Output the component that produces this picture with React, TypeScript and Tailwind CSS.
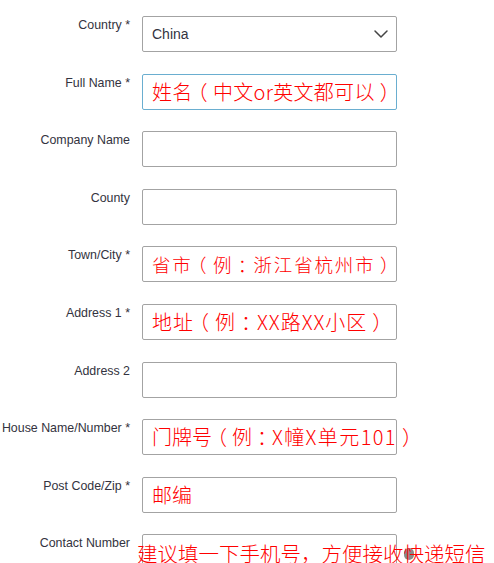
import React from "react";

function Row({
  label,
  children,
  focus = false,
  extra,
}: {
  label: string;
  children?: React.ReactNode;
  focus?: boolean;
  extra?: React.ReactNode;
}) {
  return (
    <div className="flex items-start">
      <div className="w-[130px] shrink-0 text-right text-[12.4px] leading-[14px] pt-[2px] text-[#333340] font-['Liberation_Sans',Arial,sans-serif] whitespace-nowrap">
        {label}
      </div>
      <div className="relative ml-[12px]">
        <div
          className={
            focus
              ? "w-[255px] h-[36px] rounded-[2px] border border-[#6aaed0] flex items-center pl-[9px] whitespace-nowrap"
              : "w-[255px] h-[36px] rounded-[2px] border border-[#a3a3a3] flex items-center pl-[9px] whitespace-nowrap"
          }
        >
          {children}
        </div>
        {extra}
      </div>
    </div>
  );
}

function Red({ children, cls = "" }: { children: React.ReactNode; cls?: string }) {
  return (
    <span
      className={`text-[#ff0000] font-light font-['Noto_Sans_CJK_SC','Noto_Sans',sans-serif] leading-none ${cls}`}
    >
      {children}
    </span>
  );
}

function P({ c }: { c: string }) {
  return (
    <span className="inline-block px-[0.25em] [font-feature-settings:'halt']">
      {c}
    </span>
  );
}

export default function App() {
  return (
    <div className="w-[494px] h-[563px] overflow-hidden bg-white">
      <div className="flex flex-col gap-[21.6px] pt-[16px]">
        <Row label="Country *">
          <div className="flex w-full items-center justify-between pr-[3px]">
            <span className="text-[14px] text-[#333340] font-['Liberation_Sans',Arial,sans-serif]">
              China
            </span>
            <svg width="24" height="24" viewBox="0 0 24 24" fill="none" stroke="#444" strokeWidth="1.5" strokeLinecap="round" strokeLinejoin="round">
              <path d="m6 9 6 6 6-6" />
            </svg>
          </div>
        </Row>
        <Row label="Full Name *" focus>
          <Red cls="text-[20px] tracking-[0.3px]">
            姓名<P c="（" />中文or英文都可以<P c="）" />
          </Red>
        </Row>
        <Row label="Company Name" />
        <Row label="County" />
        <Row label="Town/City *">
          <Red cls="text-[18.5px] tracking-[1.8px]">
            省市<P c="（" />例<P c="：" />浙江省杭州市<P c="）" />
          </Red>
        </Row>
        <Row label="Address 1 *">
          <Red cls="text-[20px] tracking-[1px]">
            地址<P c="（" />例<P c="：" />XX路XX小区<P c="）" />
          </Red>
        </Row>
        <Row label="Address 2" />
        <Row label="House Name/Number *">
          <Red cls="text-[20px]">
            门牌号<P c="（" />例<P c="：" />
            <span className="tracking-[1.4px]">X幢X单元101</span>
            <P c="）" />
          </Red>
        </Row>
        <Row label="Post Code/Zip *">
          <Red cls="text-[20px]">邮编</Red>
        </Row>
        <Row
          label="Contact Number"
          extra={
            <>
              <div className="absolute left-[262px] top-[14px] w-[10px] h-[12px] rounded-full bg-[#8a8a8a]" />
              <div className="absolute left-[-5px] top-[9px] whitespace-nowrap">
                <Red cls="text-[20.5px]">建议填一下手机号，方便接收快递短信</Red>
              </div>
            </>
          }
        />
      </div>
    </div>
  );
}
